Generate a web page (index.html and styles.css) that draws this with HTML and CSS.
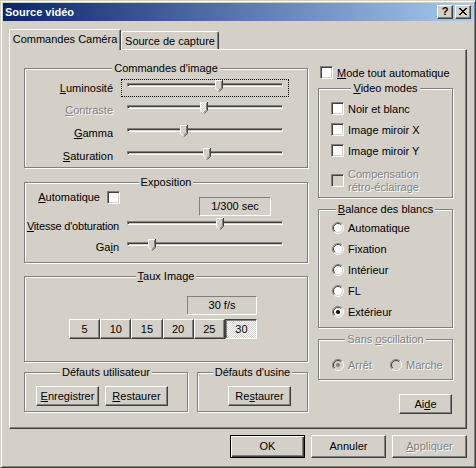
FILE: index.html
```html
<!DOCTYPE html>
<html lang="fr">
<head>
<meta charset="utf-8">
<title>Source vidéo</title>
<link rel="stylesheet" href="styles.css">
</head>
<body>
<svg width="0" height="0" class="defs" aria-hidden="true">
  <defs>
    <pattern id="dither" width="2" height="2" patternUnits="userSpaceOnUse">
      <rect width="2" height="2" fill="#d4d0c8"/>
      <rect width="1" height="1" fill="#fff"/>
      <rect x="1" y="1" width="1" height="1" fill="#fff"/>
    </pattern>
  </defs>
</svg>
<div class="window">
  <div class="titlebar">
    <span class="title">Source vidéo</span>
    <div class="capbtns">
      <div class="capbtn">?</div>
      <div class="capbtn">
        <svg width="8" height="7" viewBox="0 0 8 7" shape-rendering="crispEdges"><path d="M0 0h2v1H0zM6 0h2v1H6zM1 1h2v1H1zM5 1h2v1H5zM2 2h4v1H2zM3 3h2v1H3zM2 4h4v1H2zM1 5h2v1H1zM5 5h2v1H5zM0 6h2v1H0zM6 6h2v1H6z" fill="#000"/></svg>
      </div>
    </div>
  </div>

  <div class="tabs">
    <div class="tab active">Commandes Caméra</div>
    <div class="tab inactive">Source de capture</div>
  </div>

  <div class="panel">
    <div class="leftcol">
      <div class="group g-image">
        <div class="gtitle">Commandes d'image</div>
        <div class="srow first">
          <div class="slabel"><span><u>L</u>uminosité</span></div>
          <div class="slider focus">
            <div class="track"></div>
            <svg class="thumb" style="left:94px" width="8" height="12" viewBox="0 0 8 12"><path d="M0 0H8V8L4 12L0 8Z" fill="#d4d0c8"/><path d="M0.5 8.3V0.5H7" fill="none" stroke="#fff"/><path d="M0.6 8.2L4 11.6" fill="none" stroke="#fff"/><path d="M7.5 0V8.2L4 11.7" fill="none" stroke="#404040"/><path d="M6.5 1V7.8L4 10.3" fill="none" stroke="#808080"/></svg>
          </div>
        </div>
        <div class="srow r2">
          <div class="slabel dis"><span><u>C</u>ontraste</span></div>
          <div class="slider">
            <div class="track"></div>
            <svg class="thumb" style="left:79px" width="8" height="12" viewBox="0 0 8 12"><path d="M0 0H8V8L4 12L0 8Z" fill="url(#dither)"/><path d="M0.5 8.3V0.5H7" fill="none" stroke="#fff"/><path d="M0.6 8.2L4 11.6" fill="none" stroke="#fff"/><path d="M7.5 0V8.2L4 11.7" fill="none" stroke="#404040"/><path d="M6.5 1V7.8L4 10.3" fill="none" stroke="#808080"/></svg>
          </div>
        </div>
        <div class="srow r3">
          <div class="slabel"><span><u>G</u>amma</span></div>
          <div class="slider">
            <div class="track"></div>
            <svg class="thumb" style="left:59px" width="8" height="12" viewBox="0 0 8 12"><path d="M0 0H8V8L4 12L0 8Z" fill="#d4d0c8"/><path d="M0.5 8.3V0.5H7" fill="none" stroke="#fff"/><path d="M0.6 8.2L4 11.6" fill="none" stroke="#fff"/><path d="M7.5 0V8.2L4 11.7" fill="none" stroke="#404040"/><path d="M6.5 1V7.8L4 10.3" fill="none" stroke="#808080"/></svg>
          </div>
        </div>
        <div class="srow r3">
          <div class="slabel"><span><u>S</u>aturation</span></div>
          <div class="slider">
            <div class="track"></div>
            <svg class="thumb" style="left:82px" width="8" height="12" viewBox="0 0 8 12"><path d="M0 0H8V8L4 12L0 8Z" fill="#d4d0c8"/><path d="M0.5 8.3V0.5H7" fill="none" stroke="#fff"/><path d="M0.6 8.2L4 11.6" fill="none" stroke="#fff"/><path d="M7.5 0V8.2L4 11.7" fill="none" stroke="#404040"/><path d="M6.5 1V7.8L4 10.3" fill="none" stroke="#808080"/></svg>
          </div>
        </div>
      </div>

      <div class="group g-expo">
        <div class="gtitle">Exposition</div>
        <div class="autorow">
          <div class="autolabel"><u>A</u>utomatique</div>
          <div class="cb"></div>
          <div class="static shutter">1/300 sec</div>
        </div>
        <div class="srow vrow">
          <div class="slabel wide tight"><span><u>V</u>itesse d'obturation</span></div>
          <div class="slider">
            <div class="track"></div>
            <svg class="thumb" style="left:95px" width="8" height="12" viewBox="0 0 8 12"><path d="M0 0H8V8L4 12L0 8Z" fill="#d4d0c8"/><path d="M0.5 8.3V0.5H7" fill="none" stroke="#fff"/><path d="M0.6 8.2L4 11.6" fill="none" stroke="#fff"/><path d="M7.5 0V8.2L4 11.7" fill="none" stroke="#404040"/><path d="M6.5 1V7.8L4 10.3" fill="none" stroke="#808080"/></svg>
          </div>
        </div>
        <div class="srow grow">
          <div class="slabel wide"><span>Ga<u>i</u>n</span></div>
          <div class="slider">
            <div class="track"></div>
            <svg class="thumb" style="left:27px" width="8" height="12" viewBox="0 0 8 12"><path d="M0 0H8V8L4 12L0 8Z" fill="#d4d0c8"/><path d="M0.5 8.3V0.5H7" fill="none" stroke="#fff"/><path d="M0.6 8.2L4 11.6" fill="none" stroke="#fff"/><path d="M7.5 0V8.2L4 11.7" fill="none" stroke="#404040"/><path d="M6.5 1V7.8L4 10.3" fill="none" stroke="#808080"/></svg>
          </div>
        </div>
      </div>

      <div class="group g-rate">
        <div class="gtitle"><u>T</u>aux Image</div>
        <div class="ratebox">
          <div class="static fps">30 f/s</div>
          <div class="ratebtns">
            <div class="btn">5</div>
            <div class="btn">10</div>
            <div class="btn">15</div>
            <div class="btn">20</div>
            <div class="btn">25</div>
            <div class="btn pressed">30</div>
          </div>
        </div>
      </div>

      <div class="defrow">
        <div class="group g-user">
          <div class="gtitle">Défauts utilisateur</div>
          <div class="btnrow">
            <div class="btn small"><span><u>E</u>nregistrer</span></div>
            <div class="btn small"><span><u>R</u>estaurer</span></div>
          </div>
        </div>
        <div class="group g-factory">
          <div class="gtitle">Défauts d'usine</div>
          <div class="btn small factorybtn"><span>Re<u>s</u>taurer</span></div>
        </div>
      </div>
    </div>

    <div class="rightcol">
      <div class="cbrow modeauto">
        <div class="cb"></div>
        <span><u>M</u>ode tout automatique</span>
      </div>

      <div class="group g-video">
        <div class="gtitle"><u>V</u>ideo modes</div>
        <div class="cbrow vfirst"><div class="cb"></div><span>Noir et blanc</span></div>
        <div class="cbrow vnext"><div class="cb"></div><span>Image miroir X</span></div>
        <div class="cbrow vnext"><div class="cb"></div><span>Image miroir Y</span></div>
        <div class="cbrow comp"><div class="cb dis"></div><span class="dis">Compensation<br>rétro-éclairage</span></div>
      </div>

      <div class="group g-wb">
        <div class="gtitle"><u>B</u>alance des blancs</div>
        <div class="rbrow rfirst"><svg class="radio" width="12" height="12" viewBox="0 0 12 12"><circle cx="6" cy="6" r="5" fill="#fff"/><path d="M2.1 9.9A5.5 5.5 0 0 1 9.9 2.1" fill="none" stroke="#808080"/><path d="M9.9 2.1A5.5 5.5 0 0 1 2.1 9.9" fill="none" stroke="#fff"/><path d="M2.8 9.2A4.5 4.5 0 0 1 9.2 2.8" fill="none" stroke="#404040"/><path d="M9.2 2.8A4.5 4.5 0 0 1 2.8 9.2" fill="none" stroke="#d4d0c8"/></svg><span>Automatique</span></div>
        <div class="rbrow rnext"><svg class="radio" width="12" height="12" viewBox="0 0 12 12"><circle cx="6" cy="6" r="5" fill="#fff"/><path d="M2.1 9.9A5.5 5.5 0 0 1 9.9 2.1" fill="none" stroke="#808080"/><path d="M9.9 2.1A5.5 5.5 0 0 1 2.1 9.9" fill="none" stroke="#fff"/><path d="M2.8 9.2A4.5 4.5 0 0 1 9.2 2.8" fill="none" stroke="#404040"/><path d="M9.2 2.8A4.5 4.5 0 0 1 2.8 9.2" fill="none" stroke="#d4d0c8"/></svg><span>Fixation</span></div>
        <div class="rbrow rnext"><svg class="radio" width="12" height="12" viewBox="0 0 12 12"><circle cx="6" cy="6" r="5" fill="#fff"/><path d="M2.1 9.9A5.5 5.5 0 0 1 9.9 2.1" fill="none" stroke="#808080"/><path d="M9.9 2.1A5.5 5.5 0 0 1 2.1 9.9" fill="none" stroke="#fff"/><path d="M2.8 9.2A4.5 4.5 0 0 1 9.2 2.8" fill="none" stroke="#404040"/><path d="M9.2 2.8A4.5 4.5 0 0 1 2.8 9.2" fill="none" stroke="#d4d0c8"/></svg><span>Intérieur</span></div>
        <div class="rbrow rnext"><svg class="radio" width="12" height="12" viewBox="0 0 12 12"><circle cx="6" cy="6" r="5" fill="#fff"/><path d="M2.1 9.9A5.5 5.5 0 0 1 9.9 2.1" fill="none" stroke="#808080"/><path d="M9.9 2.1A5.5 5.5 0 0 1 2.1 9.9" fill="none" stroke="#fff"/><path d="M2.8 9.2A4.5 4.5 0 0 1 9.2 2.8" fill="none" stroke="#404040"/><path d="M9.2 2.8A4.5 4.5 0 0 1 2.8 9.2" fill="none" stroke="#d4d0c8"/></svg><span>FL</span></div>
        <div class="rbrow rnext"><svg class="radio" width="12" height="12" viewBox="0 0 12 12"><circle cx="6" cy="6" r="5" fill="#fff"/><path d="M2.1 9.9A5.5 5.5 0 0 1 9.9 2.1" fill="none" stroke="#808080"/><path d="M9.9 2.1A5.5 5.5 0 0 1 2.1 9.9" fill="none" stroke="#fff"/><path d="M2.8 9.2A4.5 4.5 0 0 1 9.2 2.8" fill="none" stroke="#404040"/><path d="M9.2 2.8A4.5 4.5 0 0 1 2.8 9.2" fill="none" stroke="#d4d0c8"/><circle cx="6" cy="6" r="2" fill="#000"/></svg><span>Extérieur</span></div>
      </div>

      <div class="group g-osc">
        <div class="gtitle dis">Sans <u>o</u>scillation</div>
        <div class="oscrow">
          <div class="rbrow arret"><svg class="radio" width="12" height="12" viewBox="0 0 12 12"><circle cx="6" cy="6" r="5" fill="#d4d0c8"/><path d="M2.1 9.9A5.5 5.5 0 0 1 9.9 2.1" fill="none" stroke="#808080"/><path d="M9.9 2.1A5.5 5.5 0 0 1 2.1 9.9" fill="none" stroke="#fff"/><path d="M2.8 9.2A4.5 4.5 0 0 1 9.2 2.8" fill="none" stroke="#404040"/><path d="M9.2 2.8A4.5 4.5 0 0 1 2.8 9.2" fill="none" stroke="#d4d0c8"/><circle cx="6" cy="6" r="2" fill="#808080"/></svg><span class="dis">Arrêt</span></div>
          <div class="rbrow"><svg class="radio" width="12" height="12" viewBox="0 0 12 12"><circle cx="6" cy="6" r="5" fill="#d4d0c8"/><path d="M2.1 9.9A5.5 5.5 0 0 1 9.9 2.1" fill="none" stroke="#808080"/><path d="M9.9 2.1A5.5 5.5 0 0 1 2.1 9.9" fill="none" stroke="#fff"/><path d="M2.8 9.2A4.5 4.5 0 0 1 9.2 2.8" fill="none" stroke="#404040"/><path d="M9.2 2.8A4.5 4.5 0 0 1 2.8 9.2" fill="none" stroke="#d4d0c8"/></svg><span class="dis">Marche</span></div>
        </div>
      </div>

      <div class="btn aide"><span>Ai<u>d</u>e</span></div>
    </div>
  </div>

  <div class="dlgbtns">
    <div class="btn dbtn default">OK</div>
    <div class="btn dbtn">Annuler</div>
    <div class="btn dbtn"><span class="dis"><u>A</u>ppliquer</span></div>
  </div>
</div>
</body>
</html>
```

FILE: styles.css
```css
* { box-sizing: border-box; }

html, body {
  margin: 0;
  padding: 0;
}

body {
  width: 476px;
  height: 468px;
  overflow: hidden;
  background: #d4d0c8;
  color: #000;
  font-family: "Liberation Sans", Arial, sans-serif;
  font-size: 11px;
  line-height: 13px;
}

.defs { position: absolute; }

u { text-decoration-thickness: 1px; text-underline-offset: 1px; }

.dis {
  color: #808080;
  text-shadow: 1px 1px 0 #fff;
}

/* window frame */
.window {
  width: 476px;
  height: 468px;
  padding: 2px;
  background: #d4d0c8;
  border: 1px solid;
  border-color: #d4d0c8 #404040 #404040 #d4d0c8;
  box-shadow: inset 1px 1px #fff, inset -1px -1px #808080;
  display: flex;
  flex-direction: column;
}

.titlebar {
  flex: none;
  height: 18px;
  display: flex;
  align-items: flex-start;
  padding-left: 2px;
  background: linear-gradient(to right, #0a246a, #a6caf0);
}

.title {
  flex: 1;
  margin-top: 3px;
  color: #fff;
  font-weight: bold;
}

.capbtns {
  display: flex;
  gap: 2px;
  margin: 2px 2px 0 0;
}

.capbtn {
  width: 16px;
  height: 14px;
  background: #d4d0c8;
  border: 1px solid;
  border-color: #fff #404040 #404040 #fff;
  box-shadow: inset -1px -1px #808080;
  display: flex;
  align-items: center;
  justify-content: center;
  font-weight: bold;
  font-size: 11px;
  line-height: 11px;
  padding-bottom: 1px;
}

/* tabs */
.tabs {
  flex: none;
  height: 20px;
  margin: 8px 0 0 6px;
  display: flex;
  align-items: flex-end;
}

.tab {
  background: #d4d0c8;
  border: 1px solid;
  border-bottom: none;
  border-color: #fff #404040 transparent #fff;
  box-shadow: inset -1px 0 #808080;
  border-radius: 2px 2px 0 0;
  text-align: center;
  padding-top: 3px;
  white-space: nowrap;
}

.tab.active {
  width: 112px;
  height: 21px;
  margin-bottom: -1px;
  position: relative;
  z-index: 1;
}

.tab.inactive {
  width: 98px;
  height: 18px;
}

.panel {
  flex: none;
  height: 380px;
  margin: 0 6px;
  border: 1px solid;
  border-color: #fff #404040 #404040 #fff;
  box-shadow: inset -1px -1px #808080;
  display: flex;
  gap: 10px;
  padding-left: 14px;
}

.leftcol {
  width: 284px;
  padding-top: 18px;
  display: flex;
  flex-direction: column;
}

.rightcol {
  width: 135px;
  padding-top: 16px;
  display: flex;
  flex-direction: column;
}

/* group boxes */
.group {
  flex: none;
  border: 1px solid #808080;
  box-shadow: inset 1px 1px #fff, 1px 1px #fff;
  display: flex;
  flex-direction: column;
}

.gtitle {
  width: fit-content;
  height: 13px;
  margin: -7px auto -6px;
  padding: 0 2px;
  background: #d4d0c8;
  white-space: nowrap;
}

.g-image { height: 100px; }
.g-expo { height: 81px; margin-top: 14px; }
.g-rate { height: 86px; margin-top: 13px; }

/* slider rows */
.srow {
  display: flex;
  align-items: center;
  height: 18px;
  flex: none;
}

.srow.first { margin-top: 10px; }
.srow.r2 { margin-top: 4px; }
.srow.r3 { margin-top: 5px; }
.srow.vrow { margin-top: 1px; }
.srow.grow { margin-top: 3px; }

.slabel {
  width: 88px;
  margin-right: 8px;
  display: flex;
  justify-content: flex-end;
  white-space: nowrap;
  padding-top: 1px;
}

.slabel.wide {
  width: 94px;
  margin-right: 2px;
}

.slabel.tight { letter-spacing: -0.2px; }

.slider {
  position: relative;
  width: 168px;
  height: 18px;
  flex: none;
  padding-top: 4px;
}

.slider.focus {
  outline: 1px dotted #000;
  outline-offset: -1px;
}

.track {
  height: 4px;
  margin: 0 6px;
  background: #d4d0c8;
  border: 1px solid;
  border-color: #808080 #fff #fff #808080;
  box-shadow: inset 1px 1px #404040;
}

.thumb {
  position: absolute;
  top: 1px;
  display: block;
}

/* exposition */
.autorow {
  display: flex;
  align-items: flex-start;
  margin-top: 8px;
  flex: none;
}

.autolabel {
  width: 75px;
  text-align: right;
  white-space: nowrap;
  height: 13px;
}

.autorow .cb { margin-left: 7px; }

.static {
  border: 1px solid;
  border-color: #808080 #fff #fff #808080;
  display: flex;
  align-items: center;
  justify-content: center;
  white-space: nowrap;
}

.shutter {
  width: 72px;
  height: 19px;
  margin: 6px 0 0 79px;
}

/* frame rate */
.ratebox {
  width: 188px;
  margin: 19px 0 0 44px;
  display: flex;
  flex-direction: column;
}

.fps {
  align-self: flex-end;
  width: 70px;
  height: 19px;
}

.ratebtns {
  display: flex;
  height: 20px;
  margin-top: 4px;
}

.ratebtns .btn { flex: 1; }

/* buttons */
.btn {
  background: #d4d0c8;
  border: 1px solid;
  border-color: #fff #404040 #404040 #fff;
  box-shadow: inset -1px -1px #808080;
  display: flex;
  align-items: center;
  justify-content: center;
  white-space: nowrap;
}

.btn.pressed {
  border-color: #404040 #fff #fff #404040;
  box-shadow: inset 1px 1px #808080;
  background: repeating-conic-gradient(#fff 0 25%, #d4d0c8 0 50%) 0 0 / 2px 2px;
  padding: 1px 0 0 1px;
}

.btn.small {
  width: 63px;
  height: 20px;
  flex: none;
}

.defrow {
  display: flex;
  gap: 9px;
  margin-top: 10px;
}

.g-user { width: 164px; height: 40px; }
.g-factory { width: 111px; height: 40px; }

.btnrow {
  display: flex;
  gap: 6px;
  margin: 13px 0 0 11px;
}

.factorybtn {
  align-self: flex-start;
  margin: 13px 0 0 30px;
}

/* checkboxes */
.cb {
  width: 13px;
  height: 13px;
  flex: none;
  background: #fff;
  border: 1px solid;
  border-color: #808080 #fff #fff #808080;
  box-shadow: inset 1px 1px #404040, inset -1px -1px #d4d0c8;
}

.cb.dis { background: #d4d0c8; }

.cbrow {
  display: flex;
  align-items: center;
  gap: 4px;
  height: 13px;
  margin-left: 12px;
  white-space: nowrap;
  flex: none;
}

.cbrow span { padding-top: 1px; }

.modeauto { margin-left: 2px; }

.g-video { height: 110px; margin-top: 9px; }
.cbrow.vfirst { margin-top: 13px; }
.cbrow.vnext { margin-top: 8px; }
.cbrow.comp { height: 26px; margin-top: 10px; }

/* radio buttons */
.radio { display: block; flex: none; }

.rbrow {
  display: flex;
  align-items: center;
  gap: 4px;
  height: 12px;
  white-space: nowrap;
  flex: none;
}

.rbrow span { padding-top: 1px; }

.g-wb { height: 119px; margin-top: 11px; }
.g-wb .rbrow { margin-left: 13px; }
.rbrow.rfirst { margin-top: 12px; }
.rbrow.rnext { margin-top: 9px; }

.g-osc { height: 41px; margin-top: 11px; }

.oscrow {
  display: flex;
  margin: 19px 0 0 13px;
}

.rbrow.arret { width: 58px; }

.aide {
  align-self: flex-end;
  width: 53px;
  height: 20px;
  margin: 14px 1px 0 0;
}

/* dialog buttons */
.dlgbtns {
  flex: none;
  display: flex;
  justify-content: flex-end;
  gap: 6px;
  margin: 6px 6px 0 0;
}

.dbtn {
  width: 75px;
  height: 23px;
}

.dbtn.default {
  border: 1px solid #000;
  box-shadow: inset 1px 1px #fff, inset -1px -1px #404040, inset -2px -2px #808080;
}
```
